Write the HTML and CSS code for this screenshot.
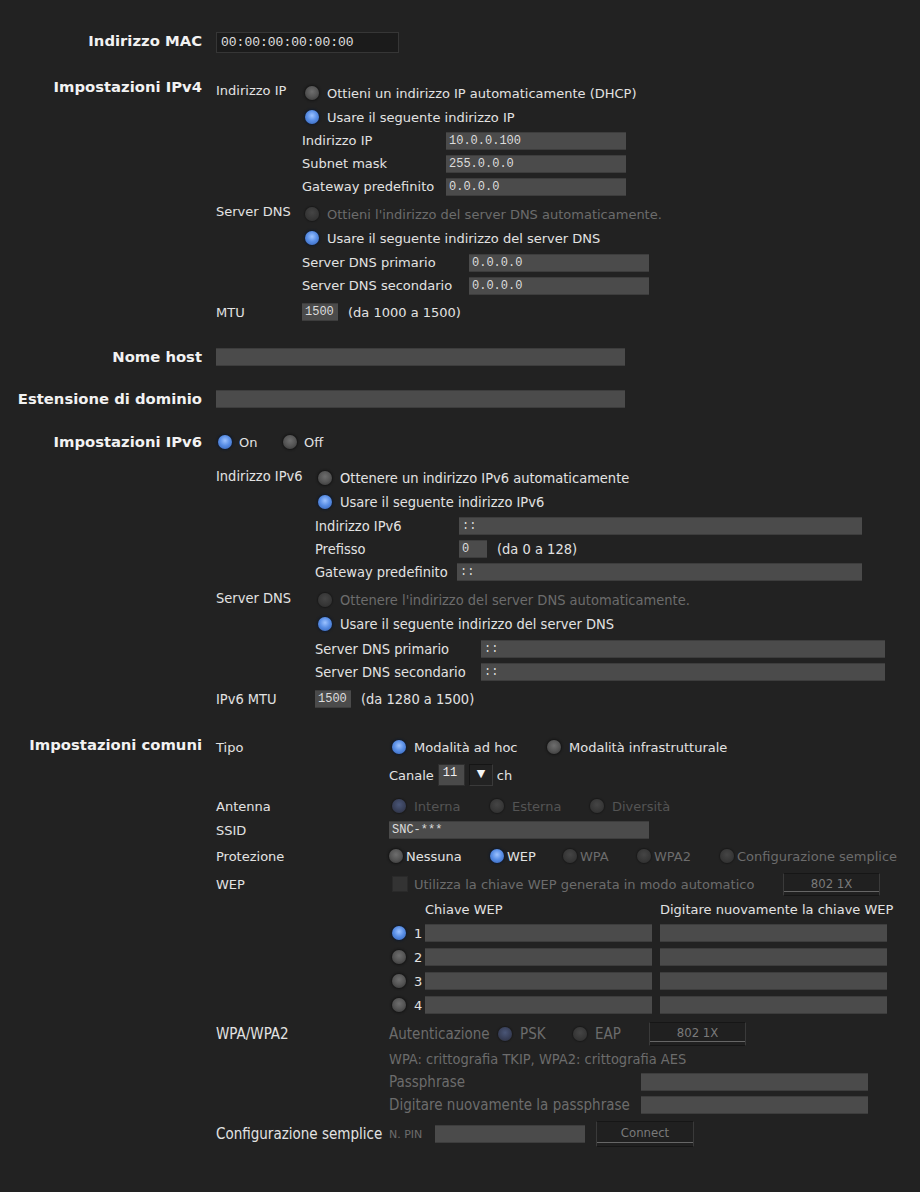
FILE: index.html
```html
<!DOCTYPE html>
<html lang="it">
<head>
<meta charset="utf-8">
<title>Rete</title>
<link rel="stylesheet" href="styles.css">
</head>
<body>
<div class="page">

  <div class="section sec-mac">
    <div class="sec-label">Indirizzo MAC</div>
    <div class="sec-body">
      <div class="row r22"><input class="mac-input" value="00:00:00:00:00:00" readonly></div>
    </div>
  </div>

  <div class="section sec-ipv4">
    <div class="sec-label">Impostazioni IPv4</div>
    <div class="sec-body">
      <div class="row r24"><span class="lab w86 up">Indirizzo IP</span><span class="radio"></span><span>Ottieni un indirizzo IP automaticamente (DHCP)</span></div>
      <div class="row r24"><span class="ind86"></span><span class="radio on"></span><span>Usare il seguente indirizzo IP</span></div>
      <div class="row"><span class="ind86"></span><span class="lab w144">Indirizzo IP</span><input class="in w180" value="10.0.0.100" readonly></div>
      <div class="row"><span class="ind86"></span><span class="lab w144">Subnet mask</span><input class="in w180" value="255.0.0.0" readonly></div>
      <div class="row"><span class="ind86"></span><span class="lab w144">Gateway predefinito</span><input class="in w180" value="0.0.0.0" readonly></div>
      <div class="row r24 mt4"><span class="lab w86 up">Server DNS</span><span class="radio dis"></span><span class="dim">Ottieni l'indirizzo del server DNS automaticamente.</span></div>
      <div class="row r24"><span class="ind86"></span><span class="radio on"></span><span>Usare il seguente indirizzo del server DNS</span></div>
      <div class="row mt1"><span class="ind86"></span><span class="lab w167">Server DNS primario</span><input class="in w180" value="0.0.0.0" readonly></div>
      <div class="row"><span class="ind86"></span><span class="lab w167">Server DNS secondario</span><input class="in w180" value="0.0.0.0" readonly></div>
      <div class="row r24 mt3"><span class="lab w86">MTU</span><input class="in w36" value="1500" readonly><span class="after">(da 1000 a 1500)</span></div>
    </div>
  </div>

  <div class="section sec-host">
    <div class="sec-label">Nome host</div>
    <div class="sec-body">
      <div class="row r22"><input class="in w409" value="" readonly></div>
    </div>
  </div>

  <div class="section sec-domain">
    <div class="sec-label">Estensione di dominio</div>
    <div class="sec-body">
      <div class="row r22"><input class="in w409" value="" readonly></div>
    </div>
  </div>

  <div class="section sec-v6head">
    <div class="sec-label">Impostazioni IPv6</div>
    <div class="sec-body">
      <div class="row r22"><span class="opt o65"><span class="radio on tight"></span><span>On</span></span><span class="opt"><span class="radio tight"></span><span>Off</span></span></div>
    </div>
  </div>

  <div class="section sec-v6">
    <div class="sec-label"></div>
    <div class="sec-body cond">
      <div class="row r24"><span class="lab w99 up">Indirizzo IPv6</span><span class="radio"></span><span>Ottenere un indirizzo IPv6 automaticamente</span></div>
      <div class="row r24"><span class="ind99"></span><span class="radio on"></span><span>Usare il seguente indirizzo IPv6</span></div>
      <div class="row"><span class="ind99"></span><span class="lab w144">Indirizzo IPv6</span><input class="in w403" value="::" readonly></div>
      <div class="row"><span class="ind99"></span><span class="lab w144">Prefisso</span><input class="in w28" value="0" readonly><span class="after">(da 0 a 128)</span></div>
      <div class="row"><span class="ind99"></span><span class="lab w142">Gateway predefinito</span><input class="in w405" value="::" readonly></div>
      <div class="row r24 mt5"><span class="lab w99 up">Server DNS</span><span class="radio dis"></span><span class="dim">Ottenere l'indirizzo del server DNS automaticamente.</span></div>
      <div class="row r24"><span class="ind99"></span><span class="radio on"></span><span>Usare il seguente indirizzo del server DNS</span></div>
      <div class="row mt1"><span class="ind99"></span><span class="lab w166">Server DNS primario</span><input class="in w404" value="::" readonly></div>
      <div class="row"><span class="ind99"></span><span class="lab w166">Server DNS secondario</span><input class="in w404" value="::" readonly></div>
      <div class="row r24 mt4"><span class="lab w99">IPv6 MTU</span><input class="in w36" value="1500" readonly><span class="after">(da 1280 a 1500)</span></div>
    </div>
  </div>

  <div class="section sec-common">
    <div class="sec-label">Impostazioni comuni</div>
    <div class="sec-body">
      <div class="row r24"><span class="lab w173">Tipo</span><span class="opt o155"><span class="radio on"></span><span>Modalità ad hoc</span></span><span class="opt"><span class="radio"></span><span>Modalità infrastrutturale</span></span></div>
      <div class="row r24 mt4"><span class="ind173"></span><span class="canale">Canale</span>
        <span class="select"><span class="sel-val">11</span><span class="sel-btn">▼</span></span><span>ch</span></div>
      <div class="row r24 mt7"><span class="lab w173">Antenna</span>
        <span class="opt o98"><span class="radio dis on-dim"></span><span class="dim2">Interna</span></span>
        <span class="opt o100"><span class="radio dis"></span><span class="dim2">Esterna</span></span>
        <span class="opt"><span class="radio dis"></span><span class="dim2">Diversità</span></span></div>
      <div class="row r24"><span class="lab w173">SSID</span><input class="in w260" value="SNC-***" readonly></div>
      <div class="row r24 mt2"><span class="lab w173">Protezione</span>
        <span class="opt o101"><span class="radio tight2"></span><span>Nessuna</span></span>
        <span class="opt o73"><span class="radio on tight2"></span><span>WEP</span></span>
        <span class="opt o74"><span class="radio dis tight2"></span><span class="dim">WPA</span></span>
        <span class="opt o83"><span class="radio dis tight2"></span><span class="dim">WPA2</span></span>
        <span class="opt"><span class="radio dis tight2"></span><span class="dim">Configurazione semplice</span></span></div>
      <div class="row r24 mt4"><span class="lab w173">WEP</span><span class="check"></span><span class="dim wepauto">Utilizza la chiave WEP generata in modo automatico</span><span class="btn b-wep">802 1X</span></div>
      <div class="row r24 mt1"><span class="ind173"></span><span class="keyhead">Chiave WEP</span><span>Digitare nuovamente la chiave WEP</span></div>
      <div class="row r24"><span class="ind173"></span><span class="radio on knum"></span><span class="num">1</span><input class="in w227" value="" readonly><input class="in w227 k2" value="" readonly></div>
      <div class="row r24"><span class="ind173"></span><span class="radio knum"></span><span class="num">2</span><input class="in w227" value="" readonly><input class="in w227 k2" value="" readonly></div>
      <div class="row r24"><span class="ind173"></span><span class="radio knum"></span><span class="num">3</span><input class="in w227" value="" readonly><input class="in w227 k2" value="" readonly></div>
      <div class="row r24"><span class="ind173"></span><span class="radio knum"></span><span class="num">4</span><input class="in w227" value="" readonly><input class="in w227 k2" value="" readonly></div>
      <div class="cond2">
        <div class="row r24 mt5"><span class="lab w173">WPA/WPA2</span><span class="dim auth">Autenticazione</span>
          <span class="opt o75"><span class="radio dis on-dim"></span><span class="dim">PSK</span></span>
          <span class="opt o79"><span class="radio dis"></span><span class="dim">EAP</span></span>
          <span class="btn">802 1X</span></div>
        <div class="row r22 mt2"><span class="ind173"></span><span class="dim note">WPA: crittografia TKIP, WPA2: crittografia AES</span></div>
        <div class="row"><span class="ind173"></span><span class="lab w252 dim">Passphrase</span><input class="in w227" value="" readonly></div>
        <div class="row"><span class="ind173"></span><span class="lab w252 dim">Digitare nuovamente la passphrase</span><input class="in w227" value="" readonly></div>
        <div class="row r26 mt5"><span class="lab w173">Configurazione semplice</span><span class="dim pin">N. PIN</span><input class="in w150" value="" readonly><span class="btn btn-connect">Connect</span></div>
      </div>
    </div>
  </div>

</div>
</body>
</html>
```

FILE: styles.css
```css
html, body {
  margin: 0;
  padding: 0;
}

body {
  background: #222222;
  color: #e2e2e2;
  font-family: "DejaVu Sans", Verdana, sans-serif;
  font-size: 13px;
}

.page {
  padding: 31px 0 40px;
}

.section {
  display: flex;
  align-items: flex-start;
}

.sec-label {
  flex: none;
  width: 202px;
  margin-right: 14px;
  text-align: right;
  font-weight: bold;
  font-size: 14.8px;
  line-height: 18px;
  color: #f2f2f2;
  white-space: nowrap;
}

.sec-body {
  display: flex;
  flex-direction: column;
}

.row {
  display: flex;
  align-items: center;
  height: 23px;
  white-space: nowrap;
}

.r22 { height: 22px; }
.r24 { height: 24px; }
.r26 { height: 26px; }
.mt1 { margin-top: 1px; }
.mt2 { margin-top: 2px; }
.mt3 { margin-top: 3px; }
.mt4 { margin-top: 4px; }
.mt5 { margin-top: 5px; }
.mt7 { margin-top: 7px; }

/* section spacing */
.sec-mac .sec-label { margin-top: 1px; }
.sec-ipv4 { margin-top: 28px; }
.sec-ipv4 .sec-label { margin-top: -3px; }
.sec-host { margin-top: 22px; }
.sec-host .sec-label { margin-top: 2px; }
.sec-domain { margin-top: 20px; }
.sec-domain .sec-label { margin-top: 2px; }
.sec-v6head { margin-top: 21px; }
.sec-v6head .sec-label { margin-top: 2px; }
.sec-v6 { margin-top: 13px; }
.sec-common { margin-top: 24px; }
.sec-common .sec-label { margin-top: 1px; }

/* labels and indents */
.lab { flex: none; }
.up { align-self: flex-start; margin-top: 2px; }
.w86 { width: 86px; }
.w99 { width: 99px; }
.w142 { width: 142px; }
.w144 { width: 144px; }
.w166 { width: 166px; }
.w167 { width: 167px; }
.w173 { width: 173px; }
.w252 { width: 252px; }
.ind86 { flex: none; width: 86px; }
.ind99 { flex: none; width: 99px; }
.ind173 { flex: none; width: 173px; }

.dim { color: #6c6c6c; }
.dim2 { color: #545454; }
.after { margin-left: 10px; }

/* fixed width option groups */
.opt { display: flex; align-items: center; flex: none; }
.o65 { width: 65px; }
.o73 { width: 73px; }
.o74 { width: 74px; }
.o75 { width: 75px; }
.o79 { width: 79px; }
.o83 { width: 83px; }
.o98 { width: 98px; }
.o100 { width: 100px; }
.o101 { width: 101px; }
.o155 { width: 155px; }

/* condensed areas */
.cond {
  font-family: "DejaVu Sans Condensed", "DejaVu Sans", sans-serif;
  font-size: 14.5px;
}
.cond2 {
  font-family: "DejaVu Sans Condensed", "DejaVu Sans", sans-serif;
  font-size: 15px;
}

/* text inputs */
.in {
  flex: none;
  box-sizing: border-box;
  height: 18px;
  margin: 0;
  padding: 0 3px;
  border: 0;
  border-top: 1px solid #3d3d3d;
  border-bottom: 1px solid #3d3d3d;
  background: #4b4b4b;
  color: #dcdcdc;
  font-family: "Liberation Mono", "DejaVu Sans Mono", monospace;
  font-size: 12px;
  outline: none;
}
.w28 { width: 28px; }
.w36 { width: 36px; }
.w150 { width: 150px; }
.w180 { width: 180px; }
.w227 { width: 227px; }
.w260 { width: 260px; }
.w403 { width: 403px; }
.w404 { width: 404px; }
.w405 { width: 405px; }
.w409 { width: 409px; }

.mac-input {
  box-sizing: border-box;
  width: 183px;
  height: 21px;
  margin: 0;
  padding: 0 4px;
  border: 1px solid #363636;
  background: #1b1b1b;
  color: #e0e0e0;
  font-family: "Liberation Mono", "DejaVu Sans Mono", monospace;
  font-size: 13px;
  outline: none;
}

/* radio buttons */
.radio {
  flex: none;
  width: 14px;
  height: 14px;
  margin: 0 8px 0 3px;
  border-radius: 50%;
  background: radial-gradient(circle at 50% 40%, #6e6e6e 0%, #555555 50%, #333333 100%);
  box-shadow: 0 0 2px 1px #141414;
}
.radio.on {
  background: radial-gradient(circle at 50% 40%, #9cc2ff 0%, #5a8fe6 45%, #2f5fb5 100%);
  box-shadow: 0 0 2px 1px #101a2c;
}
.radio.dis {
  background: radial-gradient(circle at 50% 40%, #454545 0%, #363636 60%, #2a2a2a 100%);
  box-shadow: 0 0 1px 1px #1a1a1a;
}
.radio.on-dim {
  background: radial-gradient(circle at 50% 40%, #4a5677 0%, #363d55 60%, #2a2c38 100%);
}
.radio.tight { margin: 0 7px 0 2px; }
.radio.tight2 { margin: 0 3px 0 0; }

/* select */
.canale { margin-right: 4px; }
.select {
  display: flex;
  height: 22px;
  margin-right: 4px;
}
.sel-val {
  box-sizing: border-box;
  width: 27px;
  height: 22px;
  padding: 1px 0 0 4px;
  background: #4a4a4a;
  border: 1px solid #2e2e2e;
  color: #f0f0f0;
  font-family: "Liberation Mono", monospace;
  font-size: 12px;
  line-height: 14px;
}
.sel-btn {
  box-sizing: border-box;
  width: 24px;
  height: 22px;
  margin-left: 4px;
  border: 1px solid #151515;
  border-right-color: #3a3a3a;
  border-bottom-color: #3a3a3a;
  background: #222222;
  color: #f4f4f4;
  font-size: 11px;
  line-height: 18px;
  text-align: center;
}

/* checkbox */
.check {
  flex: none;
  width: 16px;
  height: 16px;
  margin: 0 6px 0 3px;
  background: #333333;
  box-shadow: inset 0 0 0 1px #2a2a2a;
}
.wepauto { flex: none; width: 369px; }

/* buttons */
.btn {
  flex: none;
  box-sizing: border-box;
  width: 97px;
  height: 24px;
  border: 1px solid #161616;
  border-left-color: #3a3a3a;
  border-right-color: #3a3a3a;
  background: #202020;
  box-shadow: inset 0 -3px 0 #202020, inset 0 -4px 0 #666666;
  color: #7a7a7a;
  font-family: "DejaVu Sans Condensed", "DejaVu Sans", sans-serif;
  font-size: 13px;
  line-height: 20px;
  text-align: center;
}
.b-wep { height: 23px; line-height: 19px; }
.btn-connect { width: 98px; height: 26px; margin-left: 11px; line-height: 22px; }

/* WEP keys */
.keyhead { flex: none; width: 235px; margin-left: 36px; }
.knum { margin: 0 8px 0 3px; }
.num { flex: none; width: 11px; }
.k2 { margin-left: 8px; }

/* WPA */
.auth { flex: none; width: 106px; }
.note { font-size: 14.5px; }
.pin { flex: none; width: 46px; font-family: "DejaVu Sans", sans-serif; font-size: 11px; }
```
